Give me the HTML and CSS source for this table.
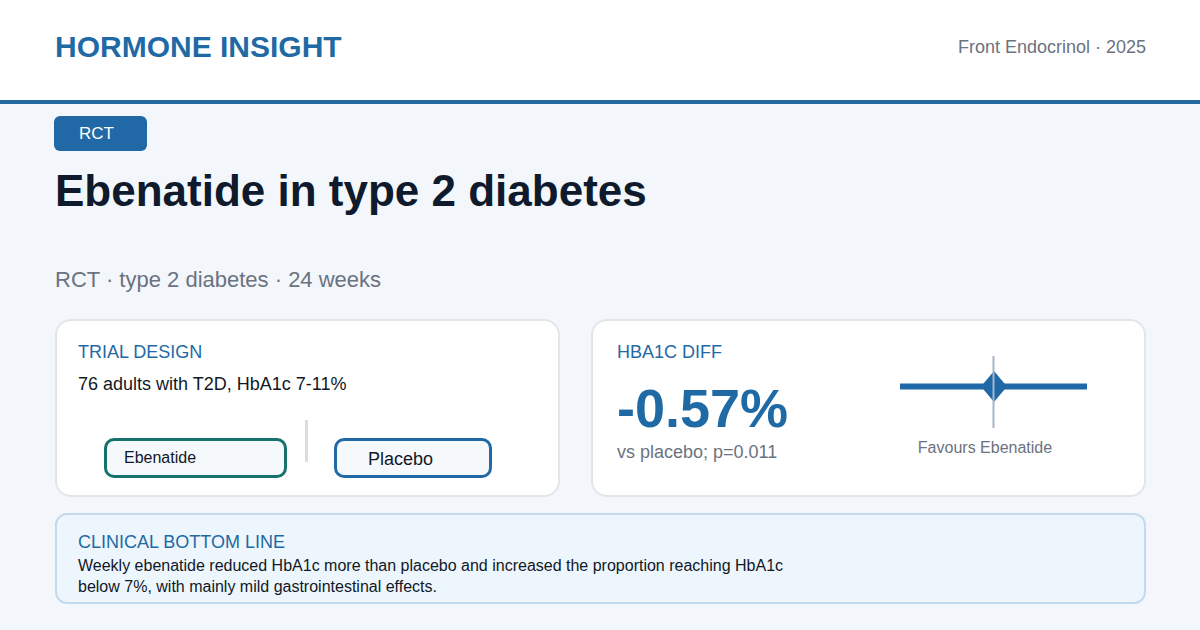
FILE: index.html
```html
<!DOCTYPE html>
<html lang="en">
<head>
<meta charset="utf-8">
<title>Hormone Insight</title>
<link rel="stylesheet" href="styles.css">
</head>
<body>
<header class="topbar">
  <div class="brand">HORMONE INSIGHT</div>
  <div class="source">Front Endocrinol · 2025</div>
</header>
<main class="content">
  <div class="badge">RCT</div>
  <h1 class="title">Ebenatide in type 2 diabetes</h1>
  <p class="subtitle">RCT · type 2 diabetes · 24 weeks</p>
  <section class="cards">
    <div class="card design">
      <div class="label">TRIAL DESIGN</div>
      <div class="design-text">76 adults with T2D, HbA1c 7-11%</div>
      <div class="arms">
        <div class="arm arm-drug">Ebenatide</div>
        <div class="arm-divider"></div>
        <div class="arm arm-placebo">Placebo</div>
      </div>
    </div>
    <div class="card result">
      <div class="result-main">
        <div class="label">HBA1C DIFF</div>
        <div class="big-number">-0.57%</div>
        <div class="result-sub">vs placebo; p=0.011</div>
      </div>
      <div class="plot">
        <svg class="forest" width="200" height="80" viewBox="0 0 200 80">
          <line x1="7" y1="36.5" x2="194" y2="36.5" stroke="#2169a6" stroke-width="6"/>
          <polygon points="88,36.5 101,21 114,36.5 101,52" fill="#2169a6"/>
          <line x1="100.5" y1="6" x2="100.5" y2="78" stroke="#a4b6c9" stroke-width="2"/>
        </svg>
        <div class="plot-caption">Favours Ebenatide</div>
      </div>
    </div>
  </section>
  <section class="bottom-line">
    <div class="label">CLINICAL BOTTOM LINE</div>
    <p class="bottom-text">Weekly ebenatide reduced HbA1c more than placebo and increased the proportion reaching HbA1c below 7%, with mainly mild gastrointestinal effects.</p>
  </section>
</main>
</body>
</html>
```
FILE: styles.css
```css
* { box-sizing: border-box; }
html, body { margin: 0; padding: 0; }
body {
  width: 1200px;
  height: 630px;
  overflow: hidden;
  background: #f3f7fb;
  font-family: "Liberation Sans", Arial, sans-serif;
  color: #111827;
}
.topbar {
  height: 104px;
  background: #ffffff;
  border-bottom: 4px solid #2569a3;
  display: flex;
  align-items: center;
  justify-content: space-between;
  padding: 0 54px 6px 55px;
}
.brand {
  font-size: 30px;
  font-weight: 700;
  color: #1f6aa5;
  line-height: 34px;
}
.source {
  font-size: 18px;
  color: #6b7280;
  line-height: 22px;
}
.content {
  padding: 12px 54px 0 55px;
}
.badge {
  display: inline-flex;
  align-items: center;
  width: 93px;
  height: 35px;
  margin-left: -1px;
  padding-left: 25px;
  background: #2169a6;
  color: #ffffff;
  font-size: 17px;
  border-radius: 6px;
}
.title {
  margin: 14px 0 0;
  font-size: 44px;
  line-height: 52px;
  font-weight: 700;
  color: #0f1b2d;
}
.subtitle {
  margin: 49px 0 0;
  font-size: 22px;
  line-height: 28px;
  color: #6b7280;
}
.cards {
  margin-top: 25px;
  display: grid;
  grid-template-columns: 505px 555px;
  column-gap: 31px;
}
.card {
  height: 178px;
  background: #ffffff;
  border: 2px solid #e1e6eb;
  border-radius: 16px;
}
.label {
  font-size: 18px;
  line-height: 22px;
  color: #1f6aa5;
}
.design {
  padding: 20px 21px 0 21px;
}
.design-text {
  margin-top: 10px;
  font-size: 18px;
  line-height: 22px;
  color: #111827;
}
.arms {
  margin-top: 25px;
  margin-left: 26px;
  display: flex;
  align-items: flex-start;
}
.arm {
  height: 40px;
  margin-top: 18px;
  display: flex;
  align-items: center;
  background: #f5f9fc;
  border-radius: 10px;
  color: #111827;
}
.arm-drug {
  width: 183px;
  border: 3px solid #17716c;
  padding-left: 17px;
  font-size: 16px;
}
.arm-divider {
  width: 3px;
  height: 42px;
  margin-left: 18px;
  margin-right: 26px;
  background: #dadde2;
}
.arm-placebo {
  width: 158px;
  border: 3px solid #2169a6;
  padding-left: 31px;
  padding-top: 2px;
  font-size: 18px;
}
.result {
  display: flex;
  padding: 20px 24px 0 24px;
}
.result-main {
  width: 276px;
}
.big-number {
  margin-top: 15px;
  font-size: 54px;
  line-height: 60px;
  font-weight: 700;
  color: #1f6aa5;
}
.result-sub {
  margin-top: 3px;
  font-size: 18px;
  line-height: 22px;
  color: #6b7280;
}
.plot {
  width: 200px;
  padding-top: 9px;
}
.forest {
  display: block;
}
.plot-caption {
  margin-top: 8px;
  padding-right: 16px;
  text-align: center;
  font-size: 16px;
  line-height: 20px;
  color: #6b7280;
}
.bottom-line {
  margin-top: 16px;
  height: 91px;
  background: #edf6fd;
  border: 2px solid #c4d9ec;
  border-radius: 12px;
  padding: 16px 21px 0 21px;
}
.bottom-text {
  margin: 2px 0 0;
  max-width: 720px;
  font-size: 16px;
  line-height: 21px;
  color: #111827;
}
```
